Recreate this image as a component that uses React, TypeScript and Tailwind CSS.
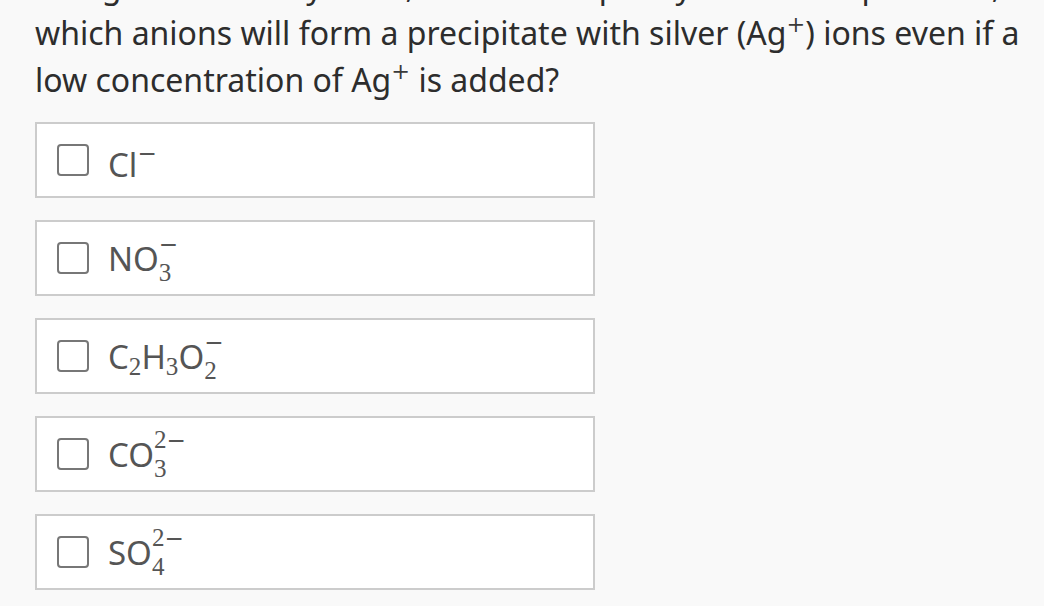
import React from "react";

// subscript digit (e.g. C2H3)
function Sub({ children }: { children: React.ReactNode }) {
  return (
    <span className="align-[-0.24em] text-[0.76em] font-['Liberation_Serif',serif] leading-none">
      {children}
    </span>
  );
}

// math minus sign
function Minus() {
  return <span className="font-['DejaVu_Sans',sans-serif] text-[0.92em]">−</span>;
}

// lone superscript charge (e.g. Cl-)
function Charge() {
  return (
    <span className="align-[0.62em] text-[0.76em] leading-none">
      <Minus />
    </span>
  );
}

// stacked sub + sup (e.g. CO3 2-)
function SubSup({ sub, sup }: { sub: string; sup?: string }) {
  return (
    <span className="inline-flex flex-col items-start align-[0.76em] leading-[1.16] text-[0.76em] font-['Liberation_Serif',serif]">
      <span>
        {sup}
        <Minus />
      </span>
      <span>{sub}</span>
    </span>
  );
}

function Plus() {
  return (
    <span className="align-[0.6em] text-[0.7em] font-['DejaVu_Serif',serif] font-light leading-none text-[#3a3a3a]">
      +
    </span>
  );
}

const options: { id: string; label: React.ReactNode }[] = [
  { id: "cl", label: <>Cl<Charge /></> },
  { id: "no3", label: <>NO<SubSup sub="3" /></> },
  {
    id: "c2h3o2",
    label: (
      <>
        C<Sub>2</Sub>H<Sub>3</Sub>O<SubSup sub="2" />
      </>
    ),
  },
  { id: "co3", label: <>CO<SubSup sub="3" sup="2" /></> },
  { id: "so4", label: <>SO<SubSup sub="4" sup="2" /></> },
];

export default function App() {
  return (
    <div className="min-h-screen bg-[#f9f9f9] font-['Noto_Sans',sans-serif] pl-[35px] overflow-hidden">
      {/* question, first line is cut off at the top */}
      <div className="-mt-[38px] text-[32px] leading-[47px] text-[#2d2d2d] w-[1009px] whitespace-nowrap">
        <p>Using the solubility rules, determine quickly which compound is, for</p>
        <p>
          which anions will form a precipitate with silver (Ag<Plus />) ions even if a
        </p>
        <p>
          low concentration of Ag<Plus /> is added?
        </p>
      </div>

      <div className="mt-[19px] flex flex-col gap-[22px] w-[560px]">
        {options.map((o) => (
          <label
            key={o.id}
            className="flex items-center h-[76px] bg-white border-2 border-[#cccccc] pl-[20px] cursor-pointer"
          >
            <input type="checkbox" className="sr-only" />
            <span className="w-[32px] h-[32px] border-2 border-[#777777] rounded-[4px] bg-white shrink-0" />
            <span className="ml-[19px] text-[33px] text-[#555555] leading-none whitespace-nowrap">{o.label}</span>
          </label>
        ))}
      </div>
    </div>
  );
}
